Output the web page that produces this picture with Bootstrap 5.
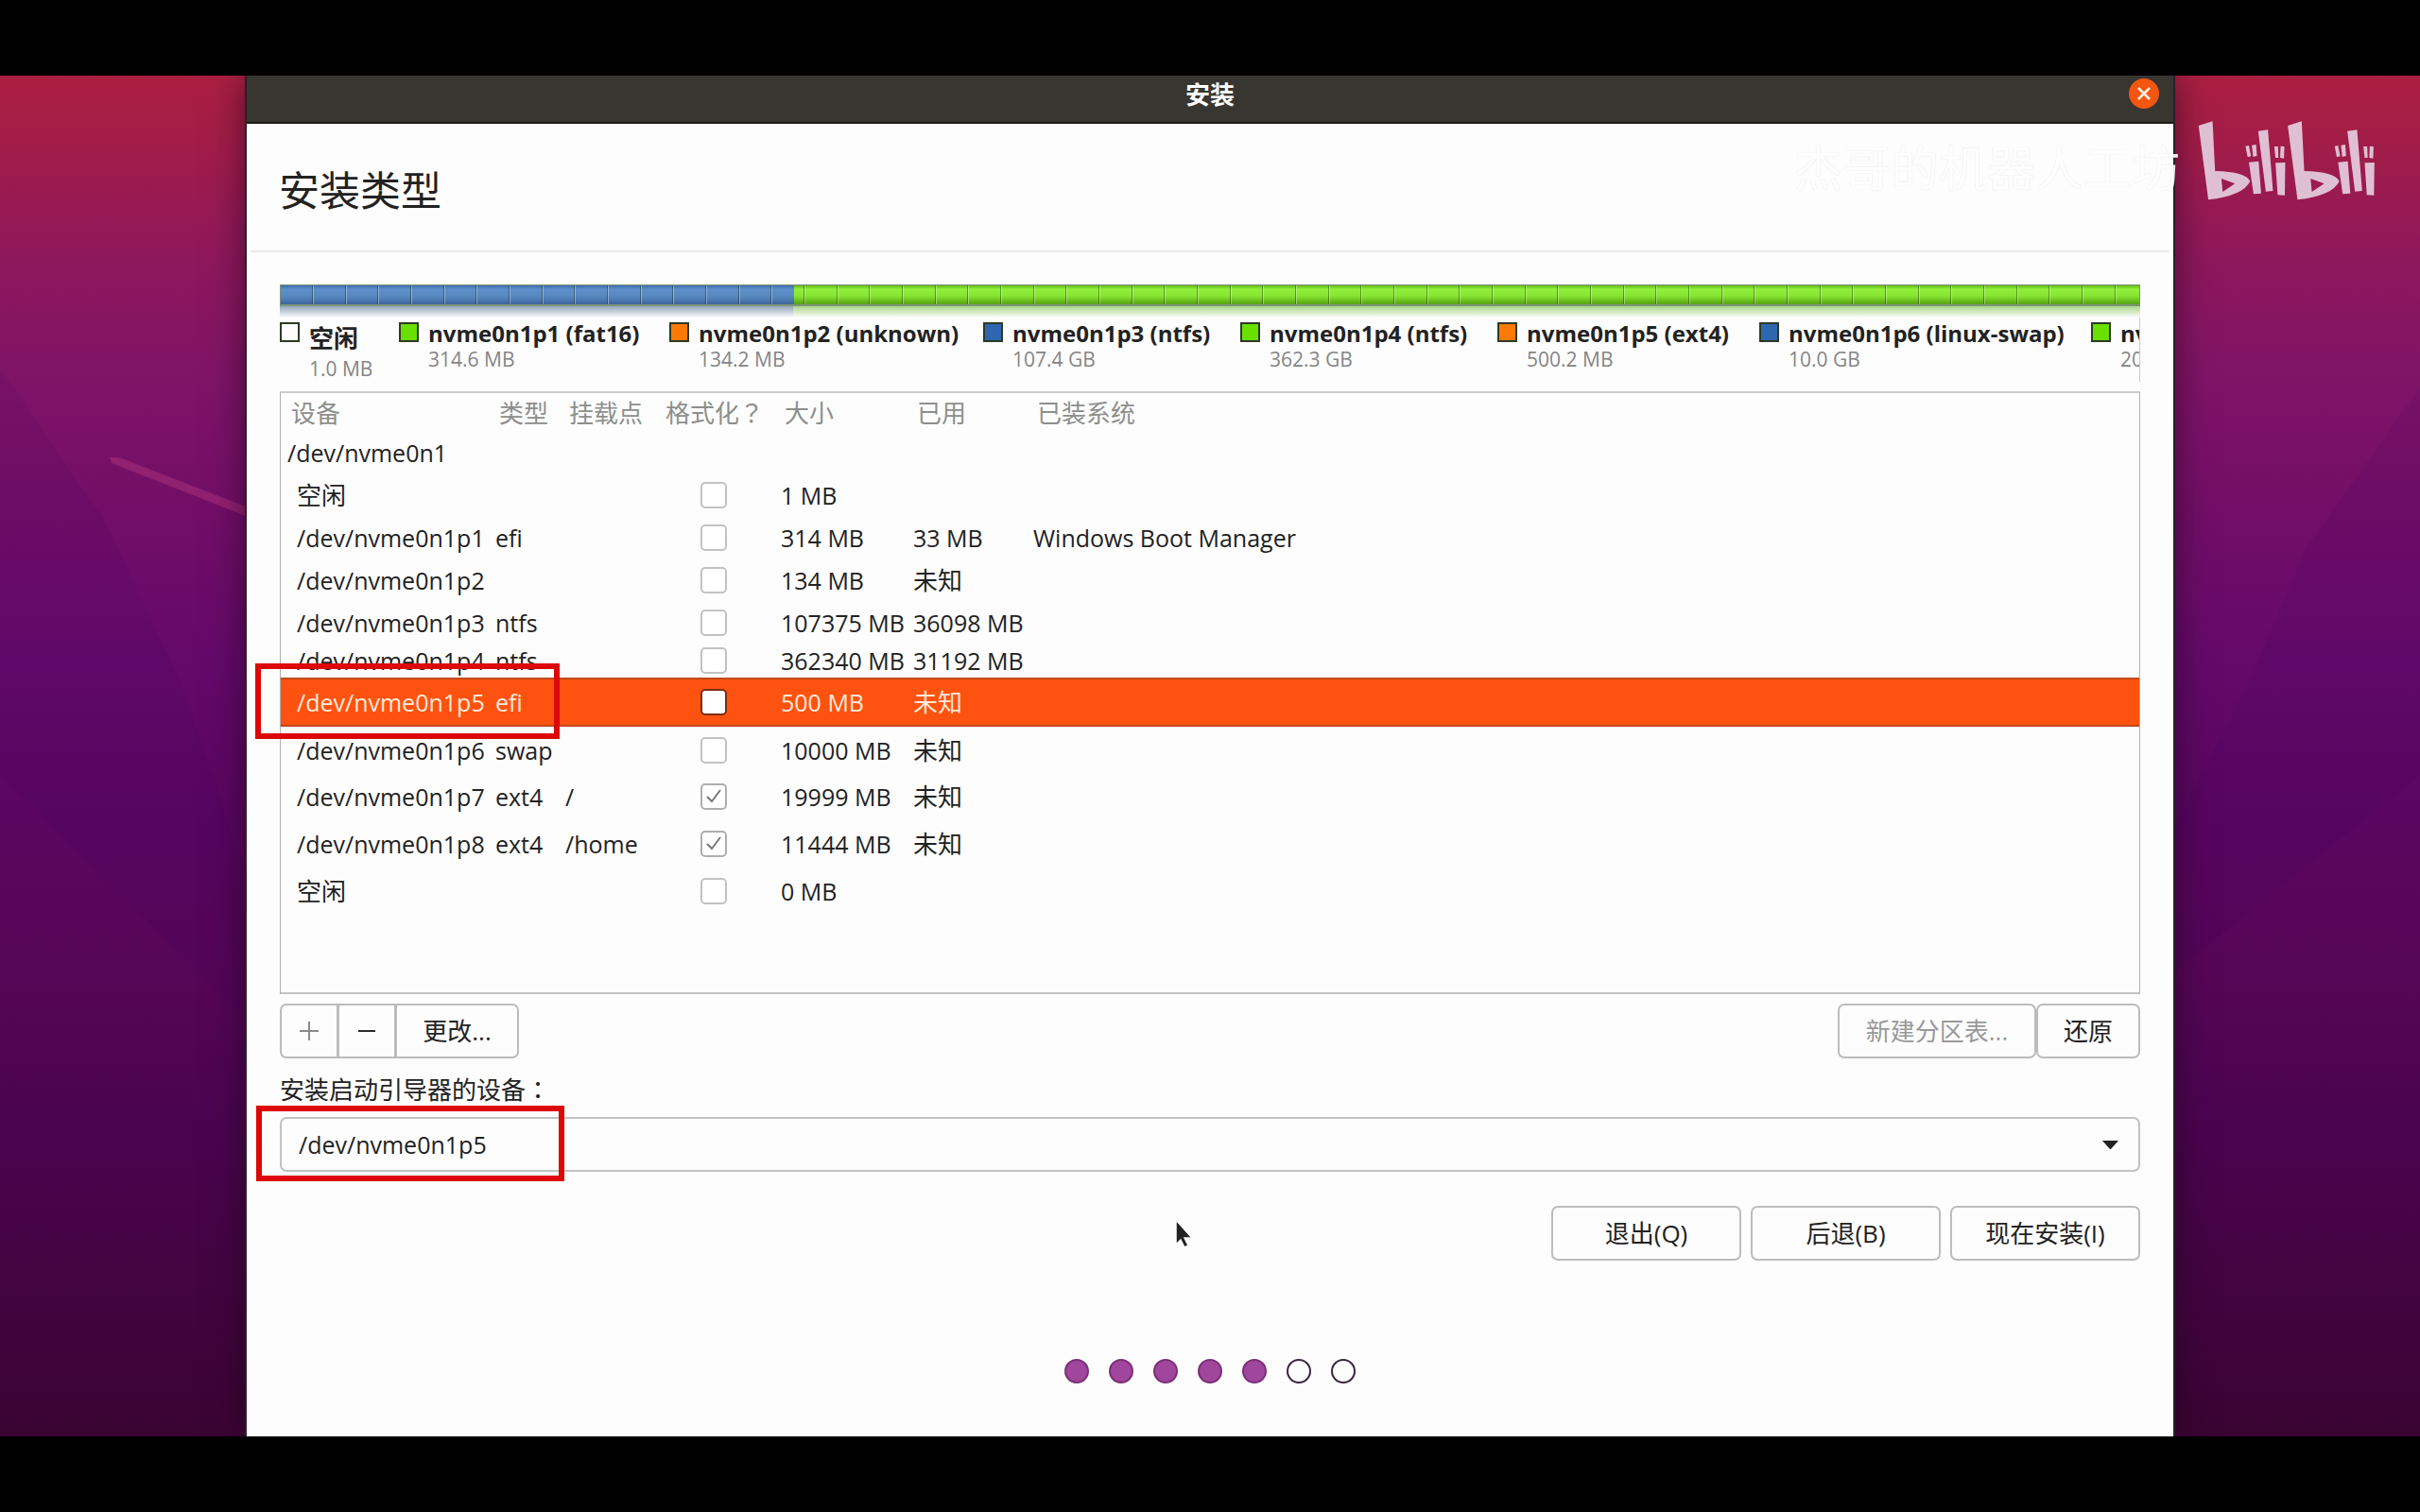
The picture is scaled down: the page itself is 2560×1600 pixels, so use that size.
<!DOCTYPE html>
<html lang="zh-CN">
<head>
<meta charset="utf-8">
<meta name="viewport" content="width=device-width, initial-scale=1">
<title>安装</title>
<link rel="stylesheet" href="https://cdn.jsdelivr.net/npm/bootstrap@5.3.0/dist/css/bootstrap.min.css">
<style>
  body { background:#000; color:#222; font:25px/30px "Open Sans","Noto Sans CJK SC",sans-serif; padding:80px 0; }
  .desktop { background:linear-gradient(#ab1f40 0%,#a01c4a 6%,#8f185b 13%,#7f1466 22%,#720e67 32%,#64096a 43%,#5a0660 54%,#560656 66%,#4a044f 77%,#430440 89%,#390432 100%); overflow:hidden; }
  .wallpaper { inset:0; }
  .installer { width:100%; max-width:2042px; background:#fdfdfd; border:solid #2a2028; border-width:0 2px; box-shadow:0 0 34px rgba(20,0,20,.55); }
  .titlebar { height:51px; background:#383631; border-bottom:2px solid #1d1c1a; color:#fff; padding:0 14px 10px; display:grid; grid-template-columns:1fr auto 1fr; align-items:center; }
  .titlebar h1 { font-size:26px; line-height:34px; font-weight:700; grid-column:2; }
  .close-btn { width:34px; height:34px; padding:0; border:0; background:none; justify-self:end; }
  .close-btn svg { display:block; }
  .page-head { margin:0 4px; padding:41px 30px 33px; border-bottom:2px solid #e9e9e9; }
  .page-head h2 { font-size:43px; line-height:60px; font-weight:400; }
  .page-body { padding:34px 35px 50px; }

  .disk-bar { height:23px; border:solid rgba(20,60,10,.55); border-width:1px 1px 2px; }
  .disk-bar div, .disk-shade div { height:100%; }
  .ticks { background-image:repeating-linear-gradient(90deg,transparent 0 33px,rgba(0,40,0,.4) 33px 34px,rgba(255,255,255,.35) 34px 35px,transparent 35px 68px,rgba(0,40,0,.4) 68px 69px,rgba(255,255,255,.35) 69px 70px,transparent 70px 102px,rgba(0,40,0,.4) 102px 103px,rgba(255,255,255,.35) 103px 104px); inset:0; }
  .bar-blue { background:linear-gradient(#3f70ae,#5e8fca 22%,#5a89c2 55%,#3b669b); }
  .bar-green { background:linear-gradient(#62b81a,#90f03b 20%,#88e631 55%,#55a212); }
  .disk-shade { height:12px; }
  .shade-blue { background:linear-gradient(#93a5bb,#fdfdfd); }
  .shade-green { background:linear-gradient(#a9d488,#fdfdfd); }

  .legend-grid { display:grid; grid-template-columns:126px 286px 332px 272px 272px 277px 351px 200px; padding-top:5px; height:68px; overflow:hidden; border-right:1px solid #c9c9c9; }
  .legend-item { display:flex; gap:10px; }
  .swatch { width:21px; height:21px; border:2px solid #2c3a24; flex:none; }
  .sw-free { background:#fdfdfd; } .sw-green { background:#69e000; } .sw-orange { background:#fb7a05; } .sw-blue { background:#2e66b0; }
  .part-name { font-size:24px; line-height:24px; font-weight:700; white-space:nowrap; }
  .part-name-cjk { font-size:26px; line-height:34px; }
  .part-size { font-size:21px; line-height:30px; color:#858585; white-space:nowrap; }

  .device-box { min-height:638px; border:1px solid #b0b0b0; border-top:2px solid #cbcbcb; border-bottom:2px solid #c4c4c4; margin-top:10px; }
  .device-table { table-layout:fixed; color:#222; --bs-table-bg:transparent; --bs-table-color:#222; }
  .device-table > :not(caption) > * > * { padding:0; vertical-align:middle; white-space:nowrap; }
  .device-table th { font-size:26px; font-weight:400; color:#8c8f8c; height:41px; }
  .device-table > thead > tr > th { padding-left:4px; }
  .device-table > thead > tr > th:first-child { padding-left:11px; }
  .device-table tr > td:first-child { padding-left:17px; }
  .device-table tr > td.disk { padding-left:7px; }
  .device-table tr > td.fmt { padding-left:41px; }
  .device-table td { height:50px; }
  .device-table .h-top td { height:44px; }
  .device-table .h-a td { height:45px; }
  .device-table .h-b td { height:37px; }
  .device-table tr.chosen > td { background:#fe5310; color:#ffe9d8; border:solid #c2481a; border-width:2px 0; }
  .cjk { font-size:26px; }
  .wide-punct { font-family:"Noto Sans CJK TC",sans-serif; }
  .tick { display:block; appearance:none; width:28px; height:28px; margin:0; border:2px solid #c2c2c2; border-radius:5px; background:#fff; }
  .tick:checked { border-color:#aeaeae; background:#fff url("data:image/svg+xml,%3Csvg xmlns='http://www.w3.org/2000/svg' viewBox='0 0 24 24'%3E%3Cpath d='M5 12l5 5 9-12' fill='none' stroke='%23777' stroke-width='2'/%3E%3C/svg%3E") center/24px no-repeat; }
  .chosen .tick { border-color:#7b2d14; }
  .callout-box { border:6px solid #dc0808; height:80px; pointer-events:none; }
  .callout-row { left:-27px; top:-17px; width:322px; }
  .callout-select { left:-25px; top:-12px; width:326px; }

  .tool-row { margin-top:10px; }
  .gbtn { --bs-btn-font-size:26px; --bs-btn-line-height:30px; --bs-btn-color:#222; --bs-btn-bg:#fdfdfd; --bs-btn-border-color:#bcbcbc; --bs-btn-border-width:2px; --bs-btn-border-radius:7px; --bs-btn-padding-x:8px; --bs-btn-padding-y:0; --bs-btn-disabled-color:#999; --bs-btn-disabled-bg:#fdfdfd; --bs-btn-disabled-border-color:#bcbcbc; --bs-btn-disabled-opacity:1; --bs-btn-hover-bg:#f1f1f1; --bs-btn-hover-border-color:#aaa; height:58px; }
  .gbtn svg { display:block; margin:auto; }
  .w-tool { width:62px; padding:0; } .w-edit { width:131px; } .w-table { width:210px; } .w-undo { width:110px; } .w-nav { width:201px; }
  .boot-label { font-size:26px; line-height:36px; margin:14px 0 11px; display:block; }
  .boot-select { height:58px; font-size:25px; line-height:30px; color:#222; background:#fdfdfd; border:2px solid #c2c2c2; border-radius:7px; padding:0 60px 0 18px; }
  .caret { right:23px; top:25px; pointer-events:none; }
  .nav-row { gap:10px; margin-top:36px; }
  .dot-row { gap:21px; margin-top:104px; }
  .dot { width:26px; height:26px; border-radius:50%; border:2px solid #3b2540; }
  .dot-on { background:#a0469c; border-color:#7a3077; }
  .pointer { left:48%; top:1208px; margin-left:2px; }
  .brand { right:46px; top:47px; gap:18px; }
  .brand span { font-size:51px; line-height:60px; color:#fff; opacity:.9; text-shadow:0 0 1px rgba(0,0,0,.16); margin-top:20px; }
</style>
<script src="https://cdn.jsdelivr.net/npm/bootstrap@5.3.0/dist/js/bootstrap.bundle.min.js"></script>
</head>
<body class="min-vh-100 d-flex flex-column">
<main class="desktop position-relative flex-grow-1 d-flex justify-content-center">
  <svg class="wallpaper position-absolute w-100 h-100" viewBox="0 0 2560 1440" preserveAspectRatio="none" aria-hidden="true">
    <path d="M0 310L110 470 190 640 262 850V1000L0 740ZM2560 330L2440 500 2380 640 2298 800V950L2560 740Z" fill="#3c0066" opacity=".09"/>
    <path d="M116 404L126 404 260 456V466L118 410Z" fill="#982574" opacity=".8"/>
  </svg>

  <section class="installer position-relative">
    <header class="titlebar">
      <h1 class="m-0">安装</h1>
      <button class="close-btn" type="button" aria-label="关闭">
        <svg width="34" height="34" viewBox="0 0 34 34"><circle cx="17" cy="16" r="16" fill="#f4550f"/><path d="M11 10l12 12M23 10L11 22" stroke="#fff0e0" stroke-width="2.6"/></svg>
      </button>
    </header>
    <div class="page-head"><h2 class="m-0">安装类型</h2></div>

    <div class="page-body">
      <div class="disk-bar d-flex position-relative">
        <div class="bar-blue" style="width:27.6%"></div>
        <div class="bar-green" style="width:72.4%"></div>
        <span class="ticks position-absolute"></span>
      </div>
      <div class="disk-shade d-flex">
        <div class="shade-blue" style="width:27.6%"></div>
        <div class="shade-green" style="width:72.4%"></div>
      </div>

      <div class="legend-grid">
        <div class="legend-item"><i class="swatch sw-free"></i><div><div class="part-name part-name-cjk">空闲</div><div class="part-size">1.0 MB</div></div></div>
        <div class="legend-item"><i class="swatch sw-green"></i><div><div class="part-name">nvme0n1p1 (fat16)</div><div class="part-size">314.6 MB</div></div></div>
        <div class="legend-item"><i class="swatch sw-orange"></i><div><div class="part-name">nvme0n1p2 (unknown)</div><div class="part-size">134.2 MB</div></div></div>
        <div class="legend-item"><i class="swatch sw-blue"></i><div><div class="part-name">nvme0n1p3 (ntfs)</div><div class="part-size">107.4 GB</div></div></div>
        <div class="legend-item"><i class="swatch sw-green"></i><div><div class="part-name">nvme0n1p4 (ntfs)</div><div class="part-size">362.3 GB</div></div></div>
        <div class="legend-item"><i class="swatch sw-orange"></i><div><div class="part-name">nvme0n1p5 (ext4)</div><div class="part-size">500.2 MB</div></div></div>
        <div class="legend-item"><i class="swatch sw-blue"></i><div><div class="part-name">nvme0n1p6 (linux-swap)</div><div class="part-size">10.0 GB</div></div></div>
        <div class="legend-item"><i class="swatch sw-green"></i><div><div class="part-name">nvme0n1p7</div><div class="part-size">20.0 GB</div></div></div>
      </div>

      <div class="device-box">
        <table class="table table-borderless device-table mb-0">
          <colgroup><col style="width:227px"><col style="width:74px"><col style="width:102px"><col style="width:126px"><col style="width:140px"><col style="width:127px"><col></colgroup>
          <thead><tr><th>设备</th><th>类型</th><th>挂载点</th><th>格式化<span class="wide-punct" lang="zh-TW">？</span></th><th>大小</th><th>已用</th><th>已装系统</th></tr></thead>
          <tbody>
            <tr class="h-top"><td class="disk">/dev/nvme0n1</td><td></td><td></td><td></td><td></td><td></td><td></td></tr>
            <tr class="h-a"><td class="cjk">空闲</td><td></td><td></td><td class="fmt"><input class="tick" type="checkbox" aria-label="格式化 空闲"></td><td>1 MB</td><td></td><td></td></tr>
            <tr class="h-a"><td>/dev/nvme0n1p1</td><td>efi</td><td></td><td class="fmt"><input class="tick" type="checkbox" aria-label="格式化 p1"></td><td>314 MB</td><td>33 MB</td><td>Windows Boot Manager</td></tr>
            <tr class="h-a"><td>/dev/nvme0n1p2</td><td></td><td></td><td class="fmt"><input class="tick" type="checkbox" aria-label="格式化 p2"></td><td>134 MB</td><td class="cjk">未知</td><td></td></tr>
            <tr class="h-a"><td>/dev/nvme0n1p3</td><td>ntfs</td><td></td><td class="fmt"><input class="tick" type="checkbox" aria-label="格式化 p3"></td><td>107375 MB</td><td>36098 MB</td><td></td></tr>
            <tr class="h-b"><td>/dev/nvme0n1p4</td><td>ntfs</td><td></td><td class="fmt"><input class="tick" type="checkbox" aria-label="格式化 p4"></td><td>362340 MB</td><td>31192 MB</td><td></td></tr>
            <tr class="chosen"><td class="position-relative">/dev/nvme0n1p5<span class="callout-box callout-row position-absolute"></span></td><td>efi</td><td></td><td class="fmt"><input class="tick" type="checkbox" aria-label="格式化 p5"></td><td>500 MB</td><td class="cjk">未知</td><td></td></tr>
            <tr><td>/dev/nvme0n1p6</td><td>swap</td><td></td><td class="fmt"><input class="tick" type="checkbox" aria-label="格式化 p6"></td><td>10000 MB</td><td class="cjk">未知</td><td></td></tr>
            <tr><td>/dev/nvme0n1p7</td><td>ext4</td><td>/</td><td class="fmt"><input class="tick" type="checkbox" checked aria-label="格式化 p7"></td><td>19999 MB</td><td class="cjk">未知</td><td></td></tr>
            <tr><td>/dev/nvme0n1p8</td><td>ext4</td><td>/home</td><td class="fmt"><input class="tick" type="checkbox" checked aria-label="格式化 p8"></td><td>11444 MB</td><td class="cjk">未知</td><td></td></tr>
            <tr><td class="cjk">空闲</td><td></td><td></td><td class="fmt"><input class="tick" type="checkbox" aria-label="格式化 末尾空闲"></td><td>0 MB</td><td></td><td></td></tr>
          </tbody>
        </table>
      </div>

      <div class="tool-row d-flex justify-content-between">
        <div class="btn-group">
          <button class="btn gbtn w-tool" type="button" aria-label="添加"><svg width="20" height="20"><path d="M0 10h20M10 0v20" stroke="#8a8a8a" stroke-width="2"/></svg></button>
          <button class="btn gbtn w-tool" type="button" aria-label="删除"><svg width="20" height="20"><path d="M1 10h18" stroke="#2b2b2b" stroke-width="2"/></svg></button>
          <button class="btn gbtn w-edit" type="button">更改...</button>
        </div>
        <div class="d-flex">
          <button class="btn gbtn w-table" type="button" disabled>新建分区表...</button>
          <button class="btn gbtn w-undo" type="button">还原</button>
        </div>
      </div>

      <label class="boot-label" for="boot">安装启动引导器的设备<span class="wide-punct" lang="zh-TW">：</span></label>
      <div class="position-relative">
        <select class="form-select boot-select" id="boot"><option>/dev/nvme0n1p5</option></select>
        <svg class="caret position-absolute" width="17" height="9"><path d="M0 0h17L9 9H8z" fill="#222"/></svg>
        <span class="callout-box callout-select position-absolute"></span>
      </div>

      <div class="d-flex justify-content-end nav-row">
        <button class="btn gbtn w-nav" type="button">退出(Q)</button>
        <button class="btn gbtn w-nav" type="button">后退(B)</button>
        <button class="btn gbtn w-nav" type="button">现在安装(I)</button>
      </div>
      <div class="dot-row d-flex justify-content-center">
        <i class="dot dot-on"></i><i class="dot dot-on"></i><i class="dot dot-on"></i><i class="dot dot-on"></i><i class="dot dot-on"></i><i class="dot"></i><i class="dot"></i>
      </div>
    </div>

    <svg class="pointer position-absolute" width="22" height="34" viewBox="0 0 22 34"><path d="M3 3v26l5-5 4 8 4-2-4-8h8z" fill="#222" stroke="#fff" stroke-width="1.5"/></svg>
  </section>

  <div class="brand position-absolute d-flex align-items-start">
    <span>杰哥的机器人工坊</span>
    <svg width="190" height="86" viewBox="1040 200 425 258" preserveAspectRatio="none" role="img" aria-label="bilibili">
      <defs><g id="bili" fill="#dfc0d2">
        <path fill-rule="evenodd" d="M1044 218L1077 204 1083 362Q1155 364 1166 394Q1150 440 1067 453ZM1098 386L1101 428 1130 402Z"/>
        <path d="M1163 334L1186 331 1192 433 1174 435ZM1155 283L1163 281 1168 315 1160 318ZM1170 280L1180 278 1182 314 1173 317ZM1185 235L1208 231 1220 425 1203 427ZM1226 336L1249 335 1248 439 1231 438ZM1223 284L1232 284 1233 320 1226 320ZM1238 283L1247 284 1246 322 1237 320Z"/>
      </g></defs>
      <use href="#bili"/><use href="#bili" x="211"/>
    </svg>
  </div>
</main>
</body>
</html>
